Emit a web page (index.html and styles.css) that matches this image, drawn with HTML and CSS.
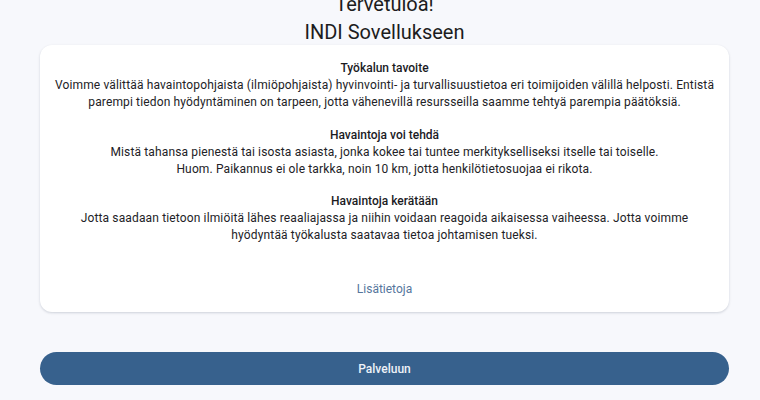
FILE: index.html
```html
<!DOCTYPE html>
<html lang="fi">
<head>
<meta charset="utf-8">
<title>INDI</title>
<link rel="stylesheet" href="styles.css">
</head>
<body>
<main class="page">
  <h1 class="title">Tervetuloa!<br>INDI Sovellukseen</h1>
  <section class="card">
    <div class="block">
      <h2 class="heading">Työkalun tavoite</h2>
      <p class="text">Voimme välittää havaintopohjaista (ilmiöpohjaista) hyvinvointi- ja turvallisuustietoa eri toimijoiden välillä helposti. Entistä parempi tiedon hyödyntäminen on tarpeen, jotta vähenevillä resursseilla saamme tehtyä parempia päätöksiä.</p>
    </div>
    <div class="block">
      <h2 class="heading">Havaintoja voi tehdä</h2>
      <p class="text">Mistä tahansa pienestä tai isosta asiasta, jonka kokee tai tuntee merkitykselliseksi itselle tai toiselle.<br>Huom. Paikannus ei ole tarkka, noin 10 km, jotta henkilötietosuojaa ei rikota.</p>
    </div>
    <div class="block">
      <h2 class="heading">Havaintoja kerätään</h2>
      <p class="text">Jotta saadaan tietoon ilmiöitä lähes reaaliajassa ja niihin voidaan reagoida aikaisessa vaiheessa. Jotta voimme hyödyntää työkalusta saatavaa tietoa johtamisen tueksi.</p>
    </div>
    <a class="more" href="#">Lisätietoja</a>
  </section>
  <button class="primary" type="button">Palveluun</button>
</main>
</body>
</html>
```
FILE: styles.css
```css
* { box-sizing: border-box; }
html, body { margin: 0; padding: 0; }
body {
  background: #f7f8fc;
  font-family: Roboto, "Noto Sans", sans-serif;
  color: #1f1f23;
  overflow: hidden;
}
.page {
  padding: 0 31px 0 40px;
  display: flex;
  flex-direction: column;
}
.title {
  margin: -10px 0 0;
  font-size: 20px;
  line-height: 28px;
  font-weight: 400;
  text-align: center;
  color: #1c1c20;
}
.card {
  margin-top: -1px;
  background: #ffffff;
  border-radius: 12px;
  box-shadow: 0 1px 3px rgba(20, 30, 60, 0.12), 0 1px 2px rgba(20, 30, 60, 0.06);
  padding: 15px 14px 14px;
  display: flex;
  flex-direction: column;
  align-items: center;
  text-align: center;
}
.block { width: 100%; }
.block + .block { margin-top: 15.5px; }
.heading {
  margin: 0;
  font-size: 12px;
  line-height: 17px;
  font-weight: 500;
  color: #1b1b1f;
}
.text {
  margin: 0;
  font-size: 12px;
  line-height: 17px;
  letter-spacing: 0.14px;
  color: #222226;
}
.more {
  margin-top: 37px;
  font-size: 12px;
  line-height: 17px;
  color: #55769c;
  text-decoration: none;
}
.primary {
  margin-top: 40px;
  height: 33px;
  border: none;
  border-radius: 17px;
  background: #37618d;
  color: #eef2f8;
  font-family: Roboto, "Noto Sans", sans-serif;
  font-size: 12px;
  font-weight: 500;
  cursor: pointer;
}
```
